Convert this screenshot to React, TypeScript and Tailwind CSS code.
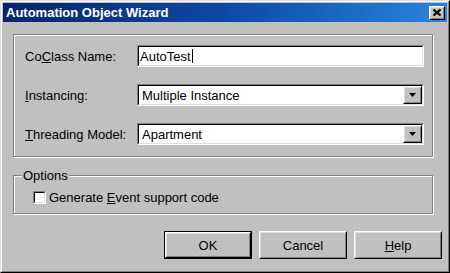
import React from "react";

function Raised({ className = "", children }: { className?: string; children?: React.ReactNode }) {
  return (
    <div className={`border border-t-white border-l-white border-r-black border-b-black bg-[#c0c0c0] ${className}`}>
      <div className="w-full h-full border border-t-[#dfdfdf] border-l-[#dfdfdf] border-r-[#808080] border-b-[#808080] flex items-center justify-center">
        {children}
      </div>
    </div>
  );
}

function Sunken({ className = "", children }: { className?: string; children?: React.ReactNode }) {
  return (
    <div className={`border border-t-[#808080] border-l-[#808080] border-r-white border-b-white ${className}`}>
      <div className="w-full h-full border border-t-black border-l-black border-r-[#dfdfdf] border-b-[#dfdfdf] bg-white flex items-center">
        {children}
      </div>
    </div>
  );
}

function Combo({ value }: { value: string }) {
  return (
    <Sunken className="w-[287px] h-[22px]">
      <span className="flex-1 pl-[3px] text-[13px] leading-[15px] text-black whitespace-nowrap">{value}</span>
      <Raised className="w-[19px] h-[18px]">
        <svg width="7" height="4" viewBox="0 0 7 4" className="block">
          <polygon points="0,0 7,0 3.5,4" fill="#000" />
        </svg>
      </Raised>
    </Sunken>
  );
}

function Btn({ children, def = false }: { children: React.ReactNode; def?: boolean }) {
  const inner = (
    <Raised className="w-full h-full">
      <span className="text-[13px] leading-[15px] text-black">{children}</span>
    </Raised>
  );
  return def ? (
    <div className="w-[88px] h-[28px] border border-black">{inner}</div>
  ) : (
    <div className="w-[88px] h-[28px]">{inner}</div>
  );
}

export default function App() {
  return (
    <div className="w-[450px] h-[273px] bg-[#c0c0c0] border border-t-[#dfdfdf] border-l-[#dfdfdf] border-r-black border-b-black font-['Liberation_Sans',Arial,sans-serif] text-black overflow-hidden">
      <div className="h-full border border-t-white border-l-white border-r-[#808080] border-b-[#808080] p-[1px] flex flex-col">
        <div className="h-[19px] shrink-0 flex items-center justify-between pl-[3px] pr-[2px] bg-gradient-to-r from-[#0a246a] via-[#0c4aa6] to-[#2a84dc]">
          <span className="text-white font-bold text-[13px] leading-[15px] whitespace-nowrap">
            Automation Object Wizard
          </span>
          <Raised className="w-[16px] h-[14px]">
            <svg width="8" height="7" viewBox="0 0 8 7" className="block">
              <path d="M0.5 0.5 L7.5 6.5 M7.5 0.5 L0.5 6.5" stroke="#000" strokeWidth="2" />
            </svg>
          </Raised>
        </div>

        <div className="flex-1 flex flex-col px-[10px] pt-[12px]">
          <div className="w-[420px] h-[123px] border border-[#808080] shadow-[inset_1px_1px_0_#fff,1px_1px_0_#fff] pt-[10px] pl-[11px] flex flex-col gap-[17px]">
            <div className="flex items-center h-[22px]">
              <span className="w-[112px] text-[13px] leading-[15px]">
                Co<u>C</u>lass Name:
              </span>
              <Sunken className="w-[287px] h-[22px]">
                <span className="pl-[1px] text-[13px] leading-[15px] whitespace-nowrap">AutoTest</span>
                <span className="w-[1px] h-[14px] bg-black ml-[1px]" />
              </Sunken>
            </div>
            <div className="flex items-center h-[22px]">
              <span className="w-[112px] text-[13px] leading-[15px]">
                <u>I</u>nstancing:
              </span>
              <Combo value="Multiple Instance" />
            </div>
            <div className="flex items-center h-[22px]">
              <span className="w-[112px] text-[13px] leading-[15px]">
                <u>T</u>hreading Model:
              </span>
              <Combo value="Apartment" />
            </div>
          </div>

          <fieldset className="mt-[11px] w-[420px] border border-[#808080] shadow-[inset_1px_1px_0_#fff,1px_1px_0_#fff] p-0">
            <legend className="ml-[8px] px-[1px] bg-[#c0c0c0] text-[13px] leading-[15px]">Options</legend>
            <div className="flex items-center h-[15px] gap-[3px] mt-[7px] mb-[8px] ml-[19px]">
              <Sunken className="w-[13px] h-[13px]" />
              <span className="text-[13px] leading-[15px] whitespace-nowrap">
                Generate <u>E</u>vent support code
              </span>
            </div>
          </fieldset>

          <div className="mt-[17px] flex gap-[7px] pl-[151px] -mr-[5px]">
            <Btn def>OK</Btn>
            <Btn>Cancel</Btn>
            <Btn>
              <u>H</u>elp
            </Btn>
          </div>
        </div>
      </div>
    </div>
  );
}
